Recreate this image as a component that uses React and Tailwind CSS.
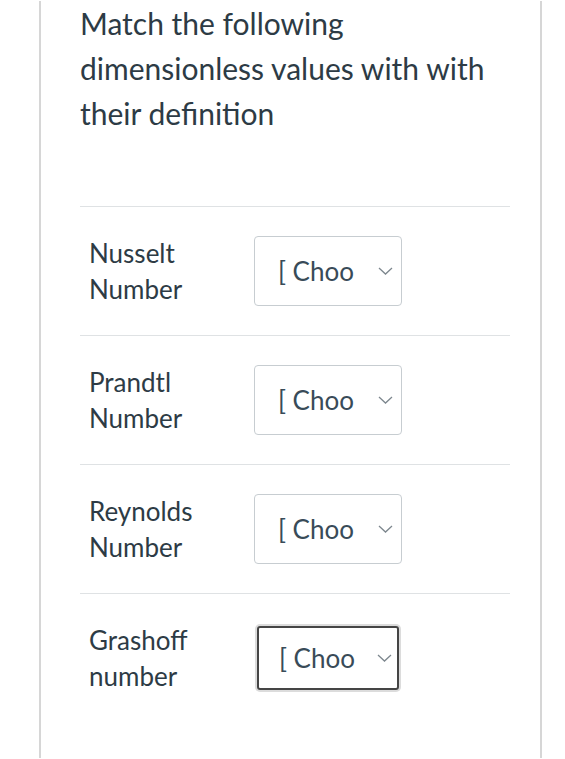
import React from 'react';

const rows = [
  ['Nusselt', 'Number'],
  ['Prandtl', 'Number'],
  ['Reynolds', 'Number'],
  ['Grashoff', 'number'],
];

function Chevron() {
  return (
    <svg width="15" height="8" viewBox="0 0 15 8" fill="none" stroke="#7d878e" strokeWidth="1.3">
      <path d="M1 1l6.5 6L14 1" />
    </svg>
  );
}

export default function App() {
  return (
    <div className="min-h-[759px] bg-white" style={{ fontFamily: 'Lato, "Open Sans", sans-serif' }}>
      <div className="ml-[39px] mr-[23px] min-h-[757px] border-x-2 border-[#d6d6d6] pl-[39px] pr-[30px]">
        {/* Question */}
        <p className="text-[30px] leading-[45px] text-[#2d3b45] mt-[1px] pb-[70px]">
          Match the following
          <br />
          dimensionless values with with
          <br />
          their definition
        </p>

        {/* Answer rows */}
        {rows.map((r, i) => {
          const last = i === rows.length - 1;
          return (
            <div key={i} className="border-t border-[#dfe2e4] flex items-start py-[29px]">
              <div className="w-[174px] pl-[9px] -my-[1px] text-[26px] leading-[36px] text-[#2d3b45]">
                {r[0]}
                <br />
                {r[1]}
              </div>
              {last ? (
                <div className="w-[148px] h-[70px] p-[3px]">
                  <div className="h-full rounded-[3px] border-2 border-[#454545] ring-2 ring-[#dcdcdc] flex items-center pl-[20px] pr-[5px]">
                    <span className="flex-1 text-[26px] text-[#394b58] leading-none">[ Choo</span>
                    <Chevron />
                  </div>
                </div>
              ) : (
                <div className="w-[148px] h-[70px] rounded-[4px] border border-[#c7cdd1] flex items-center pl-[23px] pr-[8px]">
                  <span className="flex-1 text-[26px] text-[#394b58] leading-none">[ Choo</span>
                  <Chevron />
                </div>
              )}
            </div>
          );
        })}
      </div>
    </div>
  );
}
